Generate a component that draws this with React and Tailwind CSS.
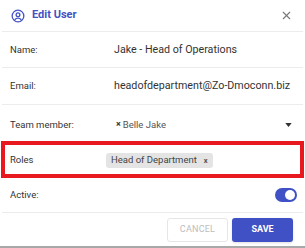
import { X } from "lucide-react";

function UserIcon() {
  return (
    <svg width="14" height="14" viewBox="0 0 24 24" fill="none" stroke="currentColor" strokeWidth="2.2" strokeLinecap="round">
      <circle cx="12" cy="12" r="10" />
      <circle cx="12" cy="10" r="3.2" />
      <path d="M6.5 18.5c1.4-2 3.3-3 5.5-3s4.1 1 5.5 3" />
    </svg>
  );
}

function Row({ label, children, className = "" }) {
  return (
    <div className={`flex items-center border-b border-[#ececec] mx-[2px] px-[8px] ${className}`}>
      <div className="w-[104px] shrink-0 text-[9.5px] text-[#333]">{label}</div>
      <div className="flex-1 flex items-center min-w-0">{children}</div>
    </div>
  );
}

export default function App() {
  return (
    <div className="w-[305px] h-[248px] bg-white overflow-hidden font-['Roboto',sans-serif] border-b-2 border-[#a8a8a8]">
      {/* Header */}
      <div className="flex items-center h-[32px] mx-[2px] border-b border-[#ececec] pl-[9px] pr-[10px]">
        <span className="text-[#4352c4]"><UserIcon /></span>
        <span className="ml-[7px] text-[11px] font-bold text-[#4352c4]">Edit User</span>
        <X className="ml-auto text-[#777]" size={13} strokeWidth={2} />
      </div>

      <Row label="Name:" className="h-[36px] pt-[2px]">
        <span className="text-[10.7px] text-[#333]">Jake - Head of Operations</span>
      </Row>
      <Row label="Email:" className="h-[37px] pt-[1px]">
        <span className="text-[10.7px] text-[#333] whitespace-nowrap">headofdepartment@Zo-Dmoconn.biz</span>
      </Row>

      <div className="flex items-center h-[36px] px-[10px] pt-[4px]">
        <div className="w-[106px] shrink-0 text-[9.5px] text-[#333]">Team member:</div>
        <div className="flex-1 flex items-center text-[9.5px] text-[#555]">
          <span className="text-[9px] font-bold text-[#333] mr-[2px]">×</span>
          Belle Jake
        </div>
        <svg width="7" height="4" viewBox="0 0 8 5" className="mr-[3px]">
          <path d="M0 0h8L4 5z" fill="#333" />
        </svg>
      </div>

      {/* Roles (highlighted) */}
      <div className="flex items-center h-[37px] mx-[1px] border-[4px] border-[#e8181f] pl-[5px] pt-[2px]">
        <div className="w-[96px] shrink-0 text-[9.5px] text-[#333]">Roles</div>
        <div className="flex items-center h-[15px] rounded-[3px] bg-[#e4e4e4] px-[5px] text-[9.5px] text-[#444]">
          Head of Department
          <span className="ml-[7px] text-[7.5px] font-bold text-[#555]">x</span>
        </div>
      </div>

      <div className="flex items-center h-[35px] mx-[2px] border-b border-[#ececec] pl-[8px] pr-[6px]">
        <div className="text-[9.5px] text-[#333]">Active:</div>
        <div className="ml-auto w-[22px] h-[14px] rounded-full bg-[#3f51c4] flex items-center justify-end pr-[2px]">
          <div className="w-[10px] h-[10px] rounded-full bg-white" />
        </div>
      </div>

      {/* Footer */}
      <div className="flex items-center justify-end gap-[4px] h-[33px] pr-[12px]">
        <button className="w-[61px] h-[24px] rounded-[3px] border border-[#e6e6e6] bg-white text-[9px] text-[#bdbdbd] tracking-wide">
          CANCEL
        </button>
        <button className="w-[61px] h-[24px] rounded-[3px] bg-[#3f51c4] text-[9px] font-bold text-white shadow-sm">
          SAVE
        </button>
      </div>
    </div>
  );
}
